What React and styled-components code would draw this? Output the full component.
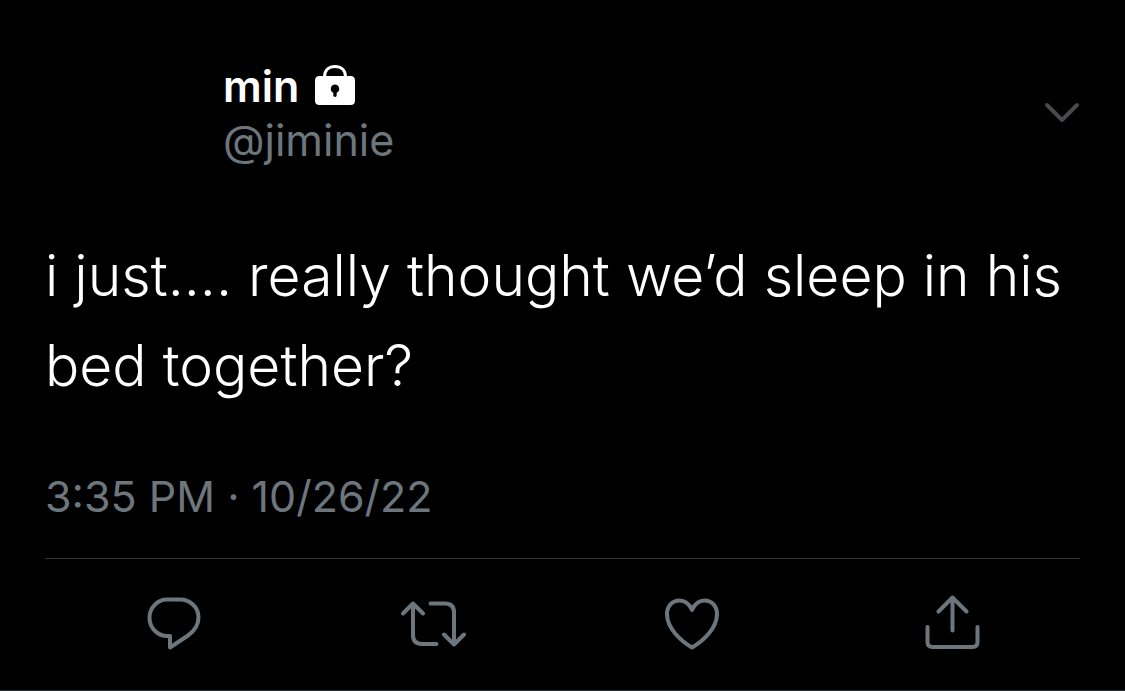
import React from "react";
import styled, { createGlobalStyle } from "styled-components";

const GlobalStyle = createGlobalStyle`
  *, *::before, *::after { box-sizing: border-box; }
  body {
    margin: 0;
    background: #000;
    color: #fff;
    font-family: Inter, "Liberation Sans", sans-serif;
  }
`;

const Tweet = styled.article`
  padding: 59px 45px 0;
  border-bottom: 1px solid #2a2d30;
`;

const Header = styled.header`
  display: grid;
  grid-template-columns: 154px 1fr auto;
  column-gap: 24px;
  align-items: center;
`;

const Avatar = styled.div`
  height: 108px;
  border-radius: 50%;
  background: #000;
`;

const Name = styled.h1`
  display: flex;
  align-items: center;
  gap: 16px;
  margin: 0;
  font-size: 43px;
  font-weight: 600;
  line-height: 54px;
`;

const Handle = styled.a`
  display: block;
  color: #6e767d;
  font-size: 43px;
  line-height: 54px;
  text-decoration: none;
`;

const IconButton = styled.button`
  display: flex;
  align-items: center;
  justify-content: center;
  padding: 0;
  border: 0;
  background: none;
  color: ${({ $color }) => $color || "#6e767d"};
  cursor: pointer;
`;

const Icon = styled.svg`
  display: block;
  fill: none;
  stroke: currentColor;
  stroke-width: 4;
  stroke-linecap: round;
  stroke-linejoin: round;
`;

const Body = styled.p`
  margin: 64px 0 58px;
  font-size: 57px;
  font-weight: 300;
  line-height: 90px;
`;

const Time = styled.time`
  display: block;
  color: #6e767d;
  font-size: 43px;
  line-height: 54px;
`;

const Actions = styled.footer`
  display: grid;
  grid-template-columns: repeat(4, 1fr);
  margin-top: 35px;
  border-top: 1px solid #2f3336;
`;

const Action = styled(IconButton)`
  height: 131px;
`;

function Lock() {
  return (
    <svg width="40" height="42" viewBox="0 0 40 42" role="img" aria-label="Protected account">
      <path d="M9.500 13V12C9.500 5 14 1.500 20 1.500S30.500 5 30.500 12V13" fill="none" stroke="#fff" strokeWidth="3" />
      <path
        fill="#fff"
        fillRule="evenodd"
        d="M4.500 11H35.500Q40 11 40 15.500V35.500Q40 40 35.500 40H4.500Q0 40 0 35.500V15.500Q0 11 4.500 11ZM20 19.500A4.300 4.300 0 0 0 18.300 27.700V30.200A1.700 1.700 0 0 0 21.700 30.200V27.700A4.300 4.300 0 0 0 20 19.500Z"
      />
    </svg>
  );
}

const actions = [
  {
    label: "Reply",
    shape: <path d="M25 4.500H38C48.500 4.500 56.500 12.500 56.500 22.500C56.500 30 53 35.500 46 40.500L28 52.500V41H25.500C15.500 41 7.500 33 7.500 22.800S15.500 4.500 25 4.500Z" />,
  },
  {
    label: "Retweet",
    shape: (
      <>
        <path d="M2 18.500L12 8.500L22 18.500M12 8.500V40Q12 49 21 49H35.500" />
        <path d="M43 39.500L53 49.500L63 39.500M53 49.500V17.500Q53 8.500 44 8.500H29.500" />
      </>
    ),
  },
  {
    label: "Like",
    shape: <path d="M33 15C30.500 9.500 26 5.500 20.500 5.500C13 5.500 8 11.500 8 19C8 33.500 22 46 33 52.500C44 46 58 33.500 58 19C58 11.500 53 5.500 45.500 5.500C40 5.500 35.500 9.500 33 15Z" />,
  },
  {
    label: "Share",
    shape: (
      <>
        <path d="M34.500 35.500V2.500M20.500 16.500L34.500 2.500L48.500 16.500" />
        <path d="M9.500 32V47Q9.500 52 14.500 52H54.500Q59.500 52 59.500 47V32" />
      </>
    ),
  },
];

export default function App() {
  return (
    <>
      <GlobalStyle />
      <Tweet>
        <Header>
          <Avatar />
          <div>
            <Name>
              min <Lock />
            </Name>
            <Handle href="#jiminie">@jiminie</Handle>
          </div>
          <IconButton type="button" aria-label="More options" $color="#47494b">
            <Icon width="36" height="22" viewBox="0 0 36 22">
              <path d="M3 3L18 18L33 3" />
            </Icon>
          </IconButton>
        </Header>
        <Body>i just.... really thought we’d sleep in his bed together?</Body>
        <Time dateTime="2022-10-26T15:35">3:35 PM · 10/26/22</Time>
        <Actions>
          {actions.map(({ label, shape }) => (
            <Action key={label} type="button" aria-label={label}>
              <Icon width="65" height="60" viewBox="0 0 65 60">
                {shape}
              </Icon>
            </Action>
          ))}
        </Actions>
      </Tweet>
    </>
  );
}
